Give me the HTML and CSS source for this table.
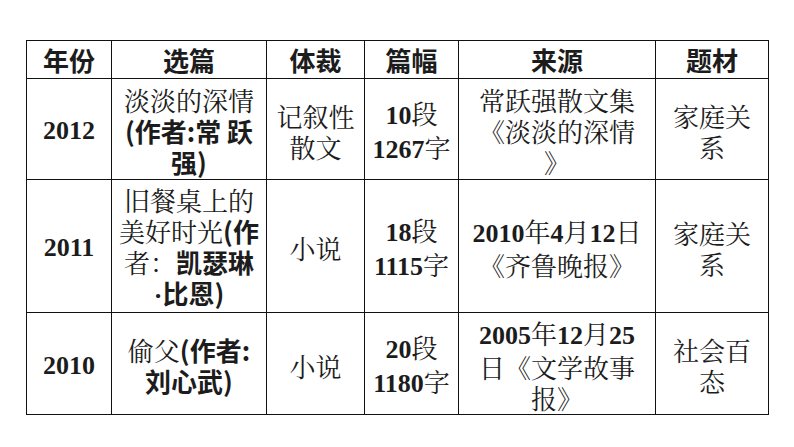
FILE: index.html
```html
<!DOCTYPE html>
<html lang="zh">
<head>
<meta charset="utf-8">
<link rel="stylesheet" href="styles.css">
</head>
<body>
<table class="tbl">
  <colgroup>
    <col class="c1"><col class="c2"><col class="c3"><col class="c4"><col class="c5"><col class="c6">
  </colgroup>
  <thead>
    <tr class="head">
      <th>年份</th><th>选篇</th><th>体裁</th><th>篇幅</th><th>来源</th><th>题材</th>
    </tr>
  </thead>
  <tbody>
    <tr class="r1">
      <td class="num">2012</td>
      <td><span class="ln">淡淡的深情</span><span class="ln b">(作者:常&nbsp;跃</span><span class="ln b">强)</span></td>
      <td><span class="ln">记叙性</span><span class="ln">散文</span></td>
      <td><span class="ln"><b class="n">10</b>段</span><span class="ln"><b class="n">1267</b>字</span></td>
      <td><span class="ln">常跃强散文集</span><span class="ln">《淡淡的深情</span><span class="ln">》</span></td>
      <td><span class="ln">家庭关</span><span class="ln">系</span></td>
    </tr>
    <tr class="r2">
      <td class="num">2011</td>
      <td><span class="ln">旧餐桌上的</span><span class="ln">美好时光<b class="b">(作</b></span><span class="ln">者：<b class="b">凯瑟琳</b></span><span class="ln b"><span class="dot">·</span>比恩)</span></td>
      <td><span class="ln">小说</span></td>
      <td><span class="ln"><b class="n">18</b>段</span><span class="ln"><b class="n">1115</b>字</span></td>
      <td><span class="ln"><b class="n">2010</b>年<b class="n">4</b>月<b class="n">12</b>日</span><span class="ln">《齐鲁晚报》</span></td>
      <td><span class="ln">家庭关</span><span class="ln">系</span></td>
    </tr>
    <tr class="r3">
      <td class="num">2010</td>
      <td><span class="ln">偷父<b class="b">(作者:</b></span><span class="ln b">刘心武)</span></td>
      <td><span class="ln">小说</span></td>
      <td><span class="ln"><b class="n">20</b>段</span><span class="ln"><b class="n">1180</b>字</span></td>
      <td><span class="ln"><b class="n">2005</b>年<b class="n">12</b>月<b class="n">25</b></span><span class="ln">日《文学故事</span><span class="ln">报》</span></td>
      <td><span class="ln">社会百</span><span class="ln">态</span></td>
    </tr>
  </tbody>
</table>
</body>
</html>
```

FILE: styles.css
```css
html, body {
  margin: 0;
  padding: 0;
  background: #ffffff;
}

body {
  padding: 40px 0 0 26px;
  color: #1c1c1c;
  font-family: "Noto Serif CJK SC", "Noto Sans CJK SC", serif;
  font-size: 26px;
}

.tbl {
  border-collapse: collapse;
  table-layout: fixed;
  width: 742px;
}

.c1 { width: 85px; }
.c2 { width: 155px; }
.c3 { width: 98px; }
.c4 { width: 94px; }
.c5 { width: 197px; }
.c6 { width: 113px; }

.tbl th,
.tbl td {
  border: 1px solid #111111;
  padding: 0;
  text-align: center;
  vertical-align: middle;
  line-height: 31px;
}

.tbl th {
  font-family: "Noto Sans CJK SC", sans-serif;
  font-weight: 700;
  height: 37px;
}

.tbl td {
  padding-top: 3px;
  font-weight: 400;
}

.r1 td { height: 97px; }
.r2 td { height: 129px; }
.r3 td { height: 98px; }

.ln {
  display: block;
  white-space: nowrap;
}

.b {
  font-family: "Noto Sans CJK SC", sans-serif;
  font-weight: 700;
}

.tbl td.num,
.n,
.dot {
  font-family: "Liberation Serif", serif;
  font-weight: 700;
}
```
